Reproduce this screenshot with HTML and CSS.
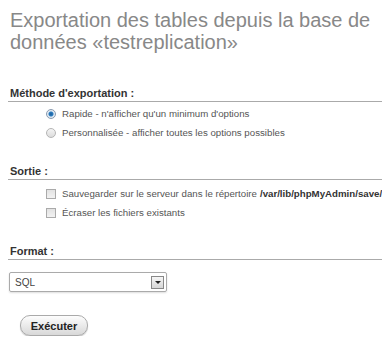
FILE: index.html
```html
<!DOCTYPE html>
<html lang="fr">
<head>
<meta charset="UTF-8">
<title>Exportation</title>
<link rel="stylesheet" href="styles.css">
</head>
<body>
  <div class="page">
    <h2 class="title">Exportation des tables depuis la base de données «testreplication»</h2>

    <div class="section first">
      <h3 class="section-head">Méthode d'exportation :</h3>
      <ul class="options">
        <li><span class="radio checked"></span>Rapide - n'afficher qu'un minimum d'options</li>
        <li><span class="radio"></span>Personnalisée - afficher toutes les options possibles</li>
      </ul>
    </div>

    <div class="section">
      <h3 class="section-head">Sortie :</h3>
      <ul class="options checks">
        <li><span class="check"></span>Sauvegarder sur le serveur dans le répertoire <b>/var/lib/phpMyAdmin/save/</b></li>
        <li><span class="check"></span>Écraser les fichiers existants</li>
      </ul>
    </div>

    <div class="section">
      <h3 class="section-head">Format :</h3>
      <div class="select">
        <span class="select-value">SQL</span>
        <span class="select-arrow"></span>
      </div>
    </div>

    <div class="actions">
      <button class="go">Exécuter</button>
    </div>
  </div>
</body>
</html>
```

FILE: styles.css
```css
* {
  box-sizing: border-box;
}

body {
  margin: 0;
  background: #fff;
  font-family: "Liberation Sans", Arial, sans-serif;
  font-size: 11px;
  color: #444;
  overflow: hidden;
}

.page {
  padding: 9px 0 0 10px;
  width: 382px;
}

.title {
  margin: 0;
  font-size: 20px;
  font-weight: normal;
  line-height: 22px;
  color: #888;
  width: 370px;
}

.section {
  margin-top: 23px;
}

.section.first {
  margin-top: 34px;
}

.section-head {
  margin: 0 0 0 -2px;
  padding: 0 0 1px 2px;
  font-size: 11px;
  line-height: 13px;
  font-weight: bold;
  color: #333;
  border-bottom: 1px solid #aaa;
}

.options {
  margin: 0;
  padding: 2px 0 0 36px;
  list-style: none;
  white-space: nowrap;
}

.options.checks {
  padding-top: 4px;
}

.options li {
  display: flex;
  align-items: center;
  height: 19px;
  font-size: 9.7px;
  color: #555;
}

.options b {
  color: #333;
  margin-left: 3px;
}

.radio {
  width: 10px;
  height: 10px;
  border-radius: 50%;
  border: 1px solid #b5b5b5;
  background: linear-gradient(#f4f4f4, #dcdcdc);
  margin-right: 6px;
  flex: none;
}

.radio.checked {
  background: radial-gradient(circle, #1d5f9a 0, #2a7cc0 2px, #dfe9f3 3px, #eaeaea 5px);
  border-color: #8a9bb0;
}

.check {
  width: 10px;
  height: 10px;
  border: 1px solid #aaa;
  background: linear-gradient(#e2e2e2, #f2f2f2);
  margin-right: 6px;
  flex: none;
}

.select {
  margin: 12px 0 0 -1px;
  width: 158px;
  height: 20px;
  border: 1px solid #aaa;
  border-radius: 2px;
  display: flex;
  align-items: center;
  justify-content: space-between;
  padding: 0 2px 0 5px;
  font-size: 10px;
  color: #444;
  box-shadow: 0 1px 2px #ddd;
}

.select-arrow {
  width: 13px;
  height: 13px;
  border: 1px solid #888;
  background: linear-gradient(#f6f6f6, #d6d6d6);
  position: relative;
}

.select-arrow::after {
  content: "";
  position: absolute;
  left: 3px;
  top: 4px;
  border-left: 3px solid transparent;
  border-right: 3px solid transparent;
  border-top: 3px solid #222;
}

.actions {
  padding: 23px 0 0 10px;
}

.go {
  font-family: "Liberation Sans", Arial, sans-serif;
  font-size: 11px;
  font-weight: bold;
  color: #222;
  width: 68px;
  height: 21px;
  border: 1px solid #aaa;
  border-radius: 10px;
  background: linear-gradient(#fdfdfd, #d8d8d8);
  box-shadow: 0 1px 1px #ccc;
  padding: 0;
}
```
